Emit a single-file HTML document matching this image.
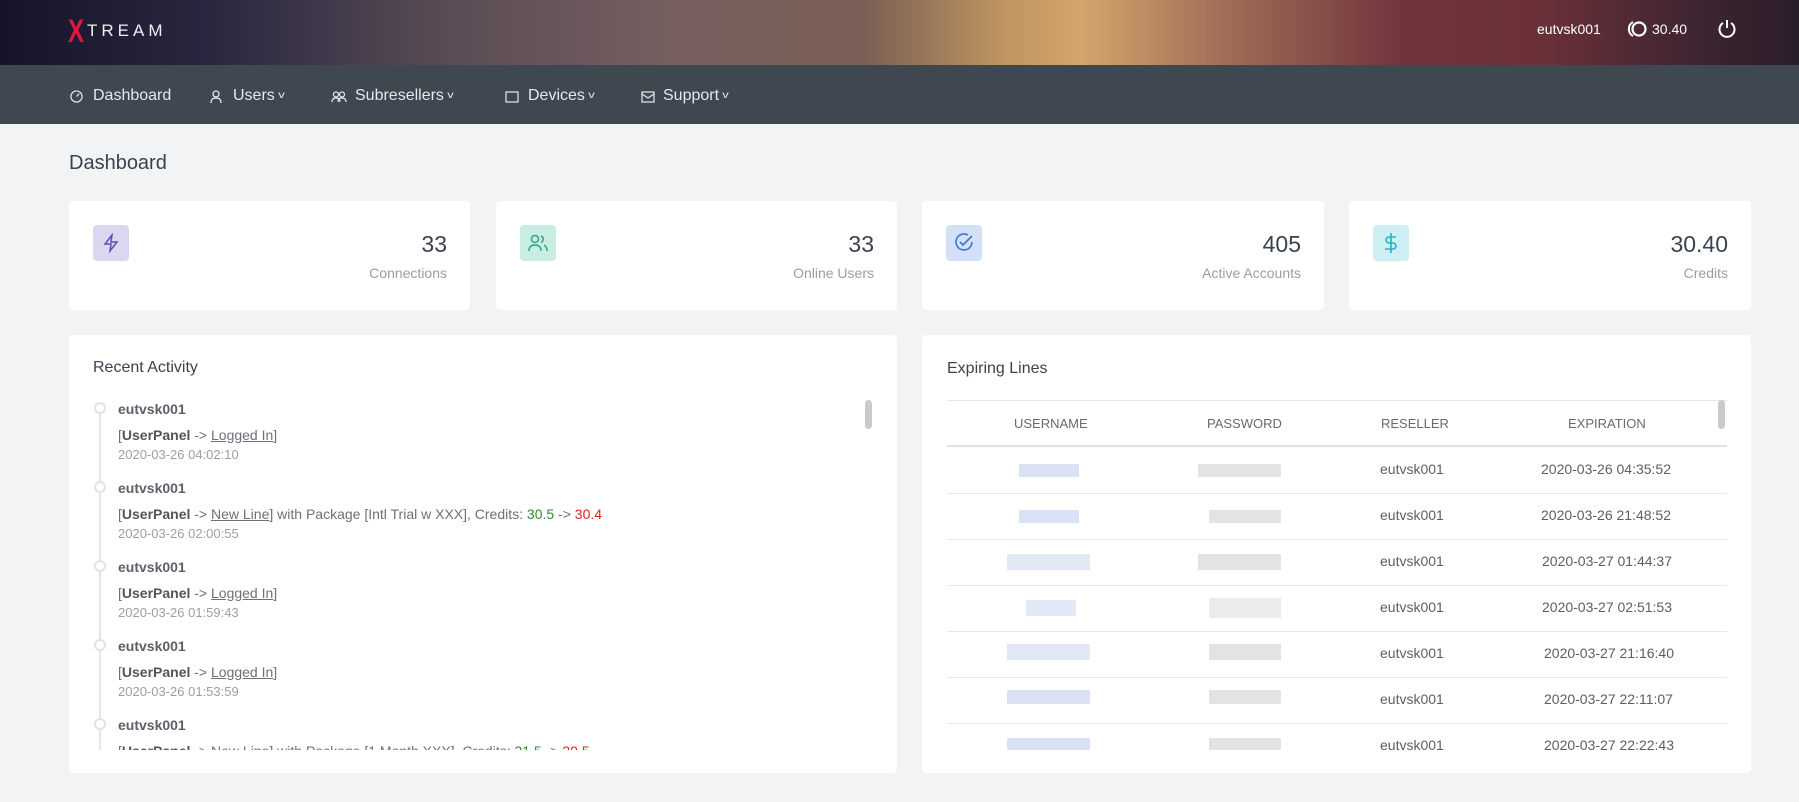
<!DOCTYPE html>
<html><head><meta charset="utf-8"><style>
*{margin:0;padding:0;box-sizing:border-box}
body{width:1799px;height:802px;overflow:hidden;background:#f2f3f5;font-family:"Liberation Sans",sans-serif;position:relative;color:#3d4450}
.a{position:absolute;white-space:nowrap}
#hdr{position:absolute;left:0;top:0;width:1799px;height:65px;background:linear-gradient(90deg,#15142a 0%,#2a2840 12%,#5a4c55 25%,#786060 38%,#7a6055 48%,#c09560 56%,#d4a66c 60%,#a06e58 68%,#70343c 78%,#6a3038 86%,#3a2430 95%,#2a1e2a 100%)}
#nav{position:absolute;left:0;top:65px;width:1799px;height:59px;background:#3f4750}
.nv{color:#e6e8ea;font-size:16px;top:87px}
.cv{font-size:10px;display:inline-block;transform:scaleX(1.3);margin-left:4px;vertical-align:2px}
.card{position:absolute;background:#fff;border-radius:4px}
.ib{position:absolute;left:24px;top:24px;width:36px;height:36px;border-radius:4px;display:flex;align-items:center;justify-content:center}
.num{position:absolute;right:23px;top:30px;font-size:23px;color:#3a4250}
.lbl{position:absolute;right:23px;top:64px;font-size:14px;color:#999ea6}
.tl{font-size:14px;color:#6b7079}
.nm{font-size:14px;color:#5b6069;font-weight:bold}
.dt{font-size:13px;color:#9aa0a8}
.th{font-size:13px;color:#666b73;text-transform:uppercase}
.td{font-size:14px;color:#5a5f66}
.hl{position:absolute;width:780px;height:1px;background:#e6e7ea}
.bu{position:absolute;height:13px;background:#dce2f5}
.bp{position:absolute;height:13px;background:#e3e3e5}
</style></head><body>
<div id="hdr"></div>
<div id="nav"></div>
<div class="a" style="left:68px;top:13px;font-size:32px;font-weight:bold;color:#e3163e;transform:scaleX(0.75);transform-origin:left">X</div>
<div class="a" style="left:87px;top:21px;font-size:17px;color:#eee;letter-spacing:4px">TREAM</div>
<div class="a" style="left:1537px;top:21px;font-size:14px;color:#fff">eutvsk001</div>
<svg class="a" style="left:1627px;top:20px" width="22" height="18" viewBox="0 0 22 18"><path d="M6 2 A8 8 0 0 0 6 16" fill="none" stroke="#fff" stroke-width="2"/><circle cx="12" cy="9" r="6.5" fill="none" stroke="#fff" stroke-width="2.2"/></svg>
<div class="a" style="left:1652px;top:21px;font-size:14px;color:#fff">30.40</div>
<svg class="a" style="left:1716px;top:18px" width="22" height="22" viewBox="0 0 22 22"><path d="M7 5 A7.5 7.5 0 1 0 15 5" fill="none" stroke="#fff" stroke-width="2"/><path d="M11 2v8" stroke="#fff" stroke-width="2"/></svg>

<svg class="a" style="left:70px;top:90px" width="13" height="13" viewBox="0 0 14 14" fill="none" stroke="#e6e8ea" stroke-width="1.3"><circle cx="7" cy="7" r="6"/><path d="M7 7l3-3"/></svg>
<div class="a nv" style="left:93px">Dashboard</div>
<svg class="a" style="left:210px;top:90px" width="12" height="14" viewBox="0 0 12 14" fill="none" stroke="#e6e8ea" stroke-width="1.3"><circle cx="6" cy="4" r="3"/><path d="M1 13c0-4 2-5 5-5s5 1 5 5"/></svg>
<div class="a nv" style="left:233px">Users<span class="cv">v</span></div>
<svg class="a" style="left:331px;top:91px" width="16" height="12" viewBox="0 0 16 12" fill="none" stroke="#e6e8ea" stroke-width="1.2"><circle cx="5" cy="3.5" r="2.5"/><circle cx="11" cy="3.5" r="2.5"/><path d="M1 11c0-3 2-4 4-4s4 1 4 4M7 11c0-3 2-4 4-4s4 1 4 4"/></svg>
<div class="a nv" style="left:355px">Subresellers<span class="cv">v</span></div>
<svg class="a" style="left:505px;top:91px" width="14" height="12" viewBox="0 0 14 12" fill="none" stroke="#e6e8ea" stroke-width="1.2"><rect x="1" y="1" width="12" height="10"/></svg>
<div class="a nv" style="left:528px">Devices<span class="cv">v</span></div>
<svg class="a" style="left:641px;top:91px" width="14" height="12" viewBox="0 0 14 12" fill="none" stroke="#e6e8ea" stroke-width="1.2"><rect x="1" y="1" width="12" height="10"/><path d="M1 3l6 4 6-4"/></svg>
<div class="a nv" style="left:663px">Support<span class="cv">v</span></div>

<div class="a" style="left:69px;top:152px;font-size:20px;color:#3a4250">Dashboard</div>

<div class="card" style="left:69px;top:201px;width:401px;height:109px"><div class="ib" style="background:#dcd7f0"><svg width="20" height="20" viewBox="0 0 20 20" fill="none" stroke="#5b4fb8" stroke-width="1.5"><path d="M11 2L4 11h6l-1 7 7-9h-6z"/></svg></div><div class="num">33</div><div class="lbl">Connections</div></div>
<div class="card" style="left:496px;top:201px;width:401px;height:109px"><div class="ib" style="background:#c8ede2"><svg width="22" height="20" viewBox="0 0 22 20" fill="none" stroke="#2aa882" stroke-width="1.5"><circle cx="8" cy="6" r="3.5"/><path d="M2 18c0-5 3-6 6-6s6 1 6 6M14 3a3.5 3.5 0 0 1 0 6.5M17 12c2 1 3 3 3 6"/></svg></div><div class="num">33</div><div class="lbl">Online Users</div></div>
<div class="card" style="left:922px;top:201px;width:402px;height:109px"><div class="ib" style="background:#d2e0f8"><svg width="22" height="22" viewBox="0 0 22 22" fill="none" stroke="#3e74d8" stroke-width="1.6"><path d="M19 10a8 8 0 1 1-4-7"/><path d="M7 10l3 3 9-9"/></svg></div><div class="num">405</div><div class="lbl">Active Accounts</div></div>
<div class="card" style="left:1349px;top:201px;width:402px;height:109px"><div class="ib" style="background:#ceeff4"><svg width="16" height="22" viewBox="0 0 16 22" fill="none" stroke="#2ab0c8" stroke-width="1.6"><path d="M8 1v20M13 5H6a3 3 0 0 0 0 6h4a3 3 0 0 1 0 6H2"/></svg></div><div class="num">30.40</div><div class="lbl">Credits</div></div>

<div class="card" style="left:69px;top:335px;width:828px;height:438px"></div>
<div class="a" style="left:93px;top:359px;font-size:16px;color:#3a4250">Recent Activity</div>
<div style="position:absolute;left:69px;top:395px;width:828px;height:355px;overflow:hidden">
<div style="position:absolute;left:30px;top:10px;width:2px;height:360px;background:#e4e5e8"></div>
<div style="position:absolute;left:796px;top:5px;width:7px;height:29px;border-radius:4px;background:#c8cace"></div>
<div style="position:absolute;top:0;left:0">
<div class="a" style="left:25px;top:7px;width:12px;height:12px;border-radius:50%;border:2px solid #e2e3e6;background:#fff"></div>
<div class="a nm" style="left:49px;top:6px">eutvsk001</div>
<div class="a tl" style="left:49px;top:32px">[<b style="color:#555">UserPanel</b> -&gt; <u>Logged In</u>]</div>
<div class="a dt" style="left:49px;top:52px">2020-03-26 04:02:10</div>
</div>
<div style="position:absolute;top:79px;left:0">
<div class="a" style="left:25px;top:7px;width:12px;height:12px;border-radius:50%;border:2px solid #e2e3e6;background:#fff"></div>
<div class="a nm" style="left:49px;top:6px">eutvsk001</div>
<div class="a tl" style="left:49px;top:32px">[<b style="color:#555">UserPanel</b> -&gt; <u>New Line</u>] with Package [Intl Trial w XXX], Credits: <span style="color:#2e8b2e">30.5</span> -&gt; <span style="color:#e02020">30.4</span></div>
<div class="a dt" style="left:49px;top:52px">2020-03-26 02:00:55</div>
</div>
<div style="position:absolute;top:158px;left:0">
<div class="a" style="left:25px;top:7px;width:12px;height:12px;border-radius:50%;border:2px solid #e2e3e6;background:#fff"></div>
<div class="a nm" style="left:49px;top:6px">eutvsk001</div>
<div class="a tl" style="left:49px;top:32px">[<b style="color:#555">UserPanel</b> -&gt; <u>Logged In</u>]</div>
<div class="a dt" style="left:49px;top:52px">2020-03-26 01:59:43</div>
</div>
<div style="position:absolute;top:237px;left:0">
<div class="a" style="left:25px;top:7px;width:12px;height:12px;border-radius:50%;border:2px solid #e2e3e6;background:#fff"></div>
<div class="a nm" style="left:49px;top:6px">eutvsk001</div>
<div class="a tl" style="left:49px;top:32px">[<b style="color:#555">UserPanel</b> -&gt; <u>Logged In</u>]</div>
<div class="a dt" style="left:49px;top:52px">2020-03-26 01:53:59</div>
</div>
<div style="position:absolute;top:316px;left:0">
<div class="a" style="left:25px;top:7px;width:12px;height:12px;border-radius:50%;border:2px solid #e2e3e6;background:#fff"></div>
<div class="a nm" style="left:49px;top:6px">eutvsk001</div>
<div class="a tl" style="left:49px;top:32px">[<b style="color:#555">UserPanel</b> -&gt; <u>New Line</u>] with Package [1 Month XXX], Credits: <span style="color:#2e8b2e">31.5</span> -&gt; <span style="color:#e02020">30.5</span></div>
</div>
</div>

<div class="card" style="left:922px;top:335px;width:829px;height:438px"></div>
<div class="a" style="left:947px;top:360px;font-size:16px;color:#3a4250">Expiring Lines</div>
<div style="position:absolute;left:922px;top:398px;width:829px;height:352px;overflow:hidden">
<div style="position:absolute;left:25px;top:2px;width:780px;height:1px;background:#e6e7ea"></div>
<div style="position:absolute;left:25px;top:47px;width:780px;height:2px;background:#dfe0e3"></div>
<div style="position:absolute;left:796px;top:2px;width:7px;height:29px;border-radius:4px;background:#c8cace"></div>
<div class="a th" style="left:92px;top:18px">Username</div>
<div class="a th" style="left:285px;top:18px">Password</div>
<div class="a th" style="left:459px;top:18px">Reseller</div>
<div class="a th" style="left:646px;top:18px">Expiration</div>
</div>
<div style="position:absolute;left:922px;top:446px;width:829px;height:304px;overflow:hidden">
<div class="hl" style="left:25px;top:47px"></div><div class="hl" style="left:25px;top:93px"></div><div class="hl" style="left:25px;top:139px"></div><div class="hl" style="left:25px;top:185px"></div><div class="hl" style="left:25px;top:231px"></div><div class="hl" style="left:25px;top:277px"></div>
<div class="bu" style="left:97px;top:18px;width:60px"></div><div class="bp" style="left:276px;top:18px;width:83px"></div>
<div class="bu" style="left:97px;top:64px;width:60px"></div><div class="bp" style="left:287px;top:64px;width:72px"></div>
<div class="bu" style="left:85px;top:108px;width:83px;height:16px;opacity:.8"></div><div class="bp" style="left:276px;top:108px;width:83px;height:16px"></div>
<div class="bu" style="left:104px;top:154px;width:50px;height:16px;opacity:.8"></div><div class="bp" style="left:287px;top:152px;width:72px;height:20px;opacity:.7"></div>
<div class="bu" style="left:85px;top:198px;width:83px;height:16px;opacity:.8"></div><div class="bp" style="left:287px;top:198px;width:72px;height:16px"></div>
<div class="bu" style="left:85px;top:244px;width:83px;height:14px"></div><div class="bp" style="left:287px;top:244px;width:72px;height:14px"></div>
<div class="bu" style="left:85px;top:292px;width:83px;height:14px"></div><div class="bp" style="left:287px;top:292px;width:72px;height:14px"></div>
<div class="a td" style="left:458px;top:15px">eutvsk001</div><div class="a td" style="left:619px;top:15px">2020-03-26 04:35:52</div>
<div class="a td" style="left:458px;top:61px">eutvsk001</div><div class="a td" style="left:619px;top:61px">2020-03-26 21:48:52</div>
<div class="a td" style="left:458px;top:107px">eutvsk001</div><div class="a td" style="left:620px;top:107px">2020-03-27 01:44:37</div>
<div class="a td" style="left:458px;top:153px">eutvsk001</div><div class="a td" style="left:620px;top:153px">2020-03-27 02:51:53</div>
<div class="a td" style="left:458px;top:199px">eutvsk001</div><div class="a td" style="left:622px;top:199px">2020-03-27 21:16:40</div>
<div class="a td" style="left:458px;top:245px">eutvsk001</div><div class="a td" style="left:622px;top:245px">2020-03-27 22:11:07</div>
<div class="a td" style="left:458px;top:291px">eutvsk001</div><div class="a td" style="left:622px;top:291px">2020-03-27 22:22:43</div>
</div>
</body></html>
